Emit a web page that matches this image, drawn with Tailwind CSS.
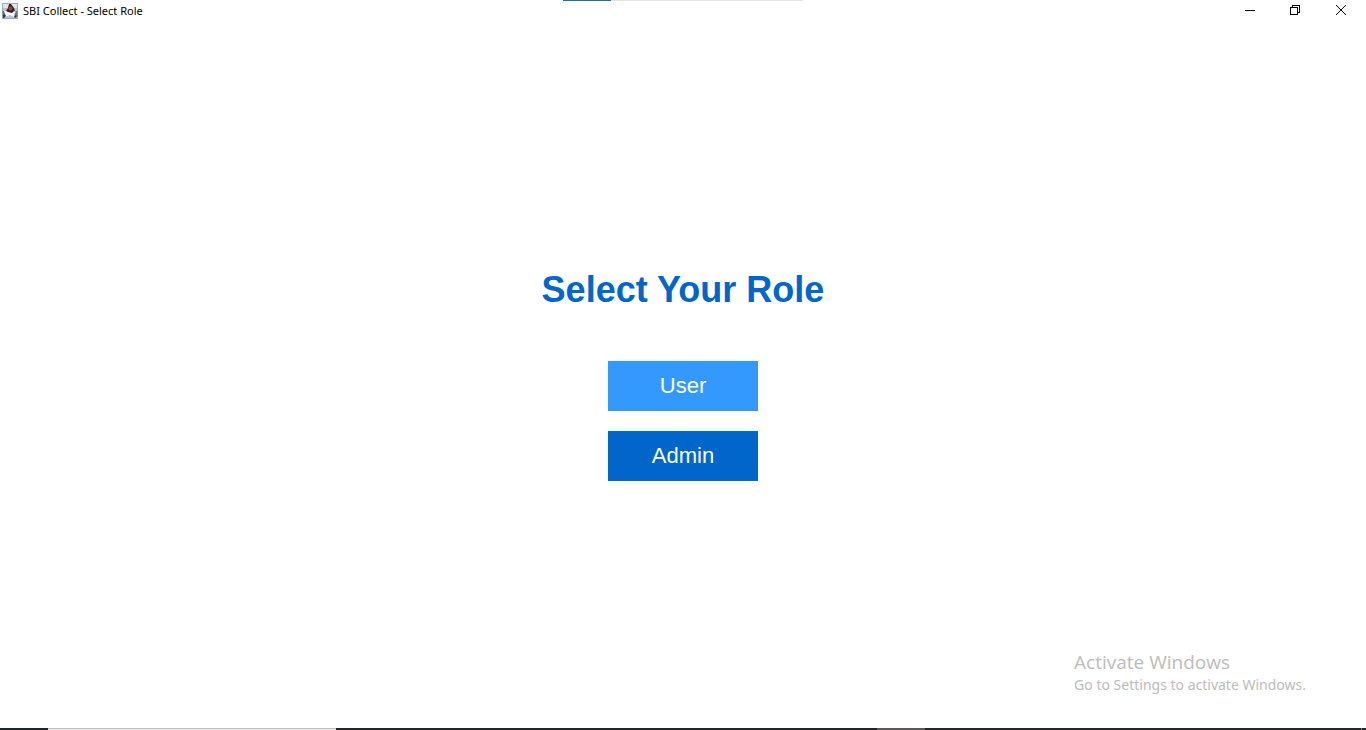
<!DOCTYPE html>
<html lang="en">
<head>
<meta charset="utf-8">
<meta name="viewport" content="width=device-width, initial-scale=1">
<title>SBI Collect - Select Role</title>
<script src="https://cdn.jsdelivr.net/npm/@tailwindcss/browser@4"></script>
</head>
<body class="relative flex min-h-screen flex-col bg-white font-['Liberation_Sans',Arial,sans-serif]">
  <!-- Progress strip at the top edge -->
  <div class="absolute inset-x-0 top-0 flex h-px justify-center"><div class="w-12 bg-[#1a73b8]"></div><div class="w-48 bg-[#e3e3e3]"></div></div>

  <header class="flex h-[22px] items-start justify-between">
    <div class="flex h-full items-center gap-[5px] pl-0.5">
      <svg class="size-4" viewBox="0 0 16 16" aria-hidden="true">
        <rect width="16" height="16" fill="#b9c4ce"/>
        <path d="M1 1h14v4H1z" fill="#dfe5ea"/>
        <path d="M0 8h3v5H0zM13 8h3v5h-3z" fill="#68747f"/>
        <path d="M7 1h2l3 4 1 4-3 2-5-1-1-2 2-3z" fill="#272629"/>
        <path d="M2 8l2 0 2 1 4 1 2-2 2 1-2 2 1 3-3-1-2-1-3 1-3 1 1-3z" fill="#fafafa"/>
        <path d="M1 12l2-1 1 2-2 2H1zM12 13l2-1 1 2-2 1z" fill="#35373b"/>
        <circle cx="8.500" cy="5.500" r="2" fill="#c2322d"/>
        <path d="M.5.5h15v15H.5z" fill="none" stroke="#93a1ae" stroke-opacity=".7"/>
      </svg>
      <span class="font-['Noto_Sans','Open_Sans',sans-serif] text-[11px] leading-4 text-black">SBI Collect - Select Role</span>
    </div>
    <div class="flex pr-0.5 text-black">
      <button type="button" aria-label="Minimize" class="flex h-5 w-[46px] items-center justify-center"><svg class="h-[11px] w-3" viewBox="0 0 12 11"><path d="M2 5h10v1H2z"/></svg></button>
      <button type="button" aria-label="Restore" class="flex h-5 w-[46px] items-center justify-center"><svg class="h-[11px] w-3" viewBox="0 0 12 11" fill="none" stroke="#000" shape-rendering="crispEdges"><path d="M1.500 2.500h7v7h-7zM3.500 2.500v-2h7v7h-2"/></svg></button>
      <button type="button" aria-label="Close" class="flex h-5 w-[46px] items-center justify-center"><svg class="h-[11px] w-3" viewBox="0 0 12 11" fill="none" stroke="#000"><path d="M1 0l10 10M11 0l-10 10"/></svg></button>
    </div>
  </header>

  <main class="flex flex-1 flex-col items-center justify-center">
    <h1 class="mb-[50px] text-4xl leading-[42px] font-bold text-[#0066cc]">Select Your Role</h1>
    <div class="flex flex-col gap-5 text-[22px] text-white">
      <button type="button" class="h-[50px] w-[150px] bg-[#3399ff] pb-0.5">User</button>
      <button type="button" class="h-[50px] w-[150px] bg-[#0066cc] pb-0.5">Admin</button>
    </div>
  </main>

  <!-- Activation watermark -->
  <aside class="absolute right-[60px] bottom-[35px] font-['Open_Sans','Noto_Sans',sans-serif] text-[#bcbcbc]">
    <p class="text-[19px] leading-[26px]">Activate Windows</p>
    <p class="font-['Noto_Sans','Open_Sans',sans-serif] text-sm leading-5">Go to Settings to activate Windows.</p>
  </aside>

  <!-- Top edge of the taskbar -->
  <footer class="flex h-0.5 bg-[#24282c]">
    <div class="w-12 bg-[#1c262e]"></div>
    <div class="w-72 border-t border-[#bdbdbd] bg-[#f0f0f0]"></div>
    <div class="flex-1 bg-[#1f272d]"></div>
    <div class="w-12 bg-[#5a5858]"></div>
    <div class="w-[436px]"></div>
    <div class="w-px bg-[#7b8083]"></div>
    <div class="w-1"></div>
  </footer>
</body>
</html>
